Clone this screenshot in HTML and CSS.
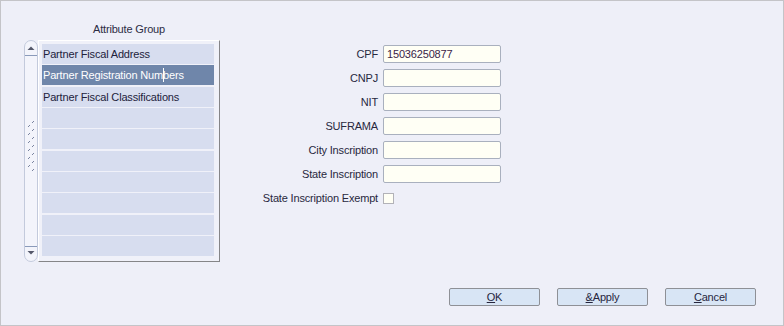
FILE: index.html
```html
<!DOCTYPE html>
<html>
<head>
<meta charset="utf-8">
<link rel="stylesheet" href="styles.css">
</head>
<body>
<div class="window">
  <div class="main">
    <div class="group">
      <div class="group-title">Attribute Group</div>
      <div class="group-body">
        <svg class="scrollbar" width="14" height="222" viewBox="0 0 14 222">
          <rect x="0.5" y="0.5" width="13" height="221" rx="6.5" ry="6.5" fill="#f3f4fb" stroke="#c3cadc"/>
          <path d="M3.5 10 L10.5 10 L7 6.5 Z" fill="#55586a"/>
          <line x1="1" y1="15.5" x2="13" y2="15.5" stroke="#8a9aba"/>
          <line x1="1" y1="206.5" x2="13" y2="206.5" stroke="#8a9aba"/>
          <path d="M3.5 211 L10.5 211 L7 214.5 Z" fill="#55586a"/>
          <g fill="#7a84a0">
            <rect x="4" y="86" width="1" height="1"/><rect x="5" y="85" width="1" height="1"/>
            <rect x="4" y="94" width="1" height="1"/><rect x="5" y="93" width="1" height="1"/>
            <rect x="4" y="102" width="1" height="1"/><rect x="5" y="101" width="1" height="1"/>
            <rect x="4" y="110" width="1" height="1"/><rect x="5" y="109" width="1" height="1"/>
            <rect x="4" y="118" width="1" height="1"/><rect x="5" y="117" width="1" height="1"/>
            <rect x="4" y="126" width="1" height="1"/><rect x="5" y="125" width="1" height="1"/>
            <rect x="8" y="82" width="1" height="1"/><rect x="9" y="81" width="1" height="1"/>
            <rect x="8" y="90" width="1" height="1"/><rect x="9" y="89" width="1" height="1"/>
            <rect x="8" y="98" width="1" height="1"/><rect x="9" y="97" width="1" height="1"/>
            <rect x="8" y="106" width="1" height="1"/><rect x="9" y="105" width="1" height="1"/>
            <rect x="8" y="114" width="1" height="1"/><rect x="9" y="113" width="1" height="1"/>
            <rect x="8" y="122" width="1" height="1"/><rect x="9" y="121" width="1" height="1"/>
            <rect x="8" y="130" width="1" height="1"/><rect x="9" y="129" width="1" height="1"/>
          </g>
        </svg>
        <div class="listbox">
          <div class="row">Partner Fiscal Address</div>
          <div class="row selected">Partner Registration Num<span class="caret"></span>bers</div>
          <div class="row">Partner Fiscal Classifications</div>
          <div class="row"></div>
          <div class="row"></div>
          <div class="row"></div>
          <div class="row"></div>
          <div class="row"></div>
          <div class="row"></div>
          <div class="row"></div>
        </div>
      </div>
    </div>
    <div class="form">
      <label class="lbl">CPF</label><div class="input">15036250877</div>
      <label class="lbl">CNPJ</label><div class="input"></div>
      <label class="lbl">NIT</label><div class="input"></div>
      <label class="lbl">SUFRAMA</label><div class="input"></div>
      <label class="lbl">City Inscription</label><div class="input"></div>
      <label class="lbl">State Inscription</label><div class="input"></div>
      <label class="lbl">State Inscription Exempt</label><div class="check-cell"><span class="checkbox"></span></div>
    </div>
  </div>
  <div class="footer">
    <button class="btn"><u>O</u>K</button>
    <button class="btn"><u>&amp;</u>Apply</button>
    <button class="btn"><u>C</u>ancel</button>
  </div>
</div>
</body>
</html>
```
FILE: styles.css
```css
html, body {
  margin: 0;
  padding: 0;
  background: #eeeff8;
}
body {
  font-family: "Liberation Sans", Arial, sans-serif;
  font-size: 11px;
  letter-spacing: -0.17px;
  color: #26263e;
}
.window {
  width: 784px;
  height: 326px;
  box-sizing: border-box;
  border: 1px solid #c4c4c8;
  background: #eeeff8;
  display: flex;
  flex-direction: column;
}
.main {
  display: flex;
  align-items: flex-start;
  padding-top: 22px;
  padding-left: 23px;
}
.group {
  display: flex;
  flex-direction: column;
}
.group-title {
  margin-left: 14px;
  text-align: center;
  height: 13px;
  line-height: 13px;
  margin-bottom: 4px;
  color: #2c2c44;
}
.group-body {
  display: flex;
}
.scrollbar {
  display: block;
  flex: none;
}
.listbox {
  width: 182px;
  height: 222px;
  box-sizing: border-box;
  border-top: 1px solid #ffffff;
  border-left: 1px solid #ffffff;
  border-right: 1px solid #858588;
  border-bottom: 1px solid #858588;
  padding: 3px 5px 5px 3px;
  background: #f0f1f9;
  display: grid;
  grid-template-rows: repeat(10, 20px);
  row-gap: 1.333px;
}
.row {
  background: #d7ddef;
  padding-left: 1px;
  line-height: 20px;
  white-space: nowrap;
  color: #22223c;
}
.row.selected {
  background: #6f86aa;
  color: #ffffff;
}
.caret {
  display: inline-block;
  width: 0;
  height: 14px;
  border-left: 1px solid #ffffff;
  vertical-align: middle;
  margin-right: -1px;
  position: relative;
  top: -1px;
}
.form {
  margin-left: 38px;
  margin-top: 22px;
  display: grid;
  grid-template-columns: 120px 118px;
  column-gap: 5px;
  grid-auto-rows: 18px;
  row-gap: 6px;
  align-items: center;
}
.lbl {
  text-align: right;
  white-space: nowrap;
  color: #28283e;
}
.input {
  height: 18px;
  box-sizing: border-box;
  border: 1px solid #a9b0be;
  border-radius: 2px;
  background: #fffff5;
  padding-left: 3px;
  line-height: 16px;
  color: #3a2448;
}
.check-cell {
  display: flex;
  align-items: center;
}
.checkbox {
  width: 11px;
  height: 11px;
  box-sizing: border-box;
  border: 1px solid #b2b2b8;
  background: #fffff5;
  margin-top: 1px;
}
.footer {
  margin-top: auto;
  display: flex;
  justify-content: flex-end;
  gap: 17px;
  padding-right: 27px;
  padding-bottom: 19px;
}
.btn {
  width: 91px;
  height: 18px;
  box-sizing: border-box;
  border: 1px solid #8e9096;
  border-radius: 2px;
  background: #d8e5f5;
  font-family: "Liberation Sans", Arial, sans-serif;
  font-size: 11px;
  letter-spacing: -0.17px;
  color: #26263e;
  padding: 0;
  line-height: 16px;
}
```
